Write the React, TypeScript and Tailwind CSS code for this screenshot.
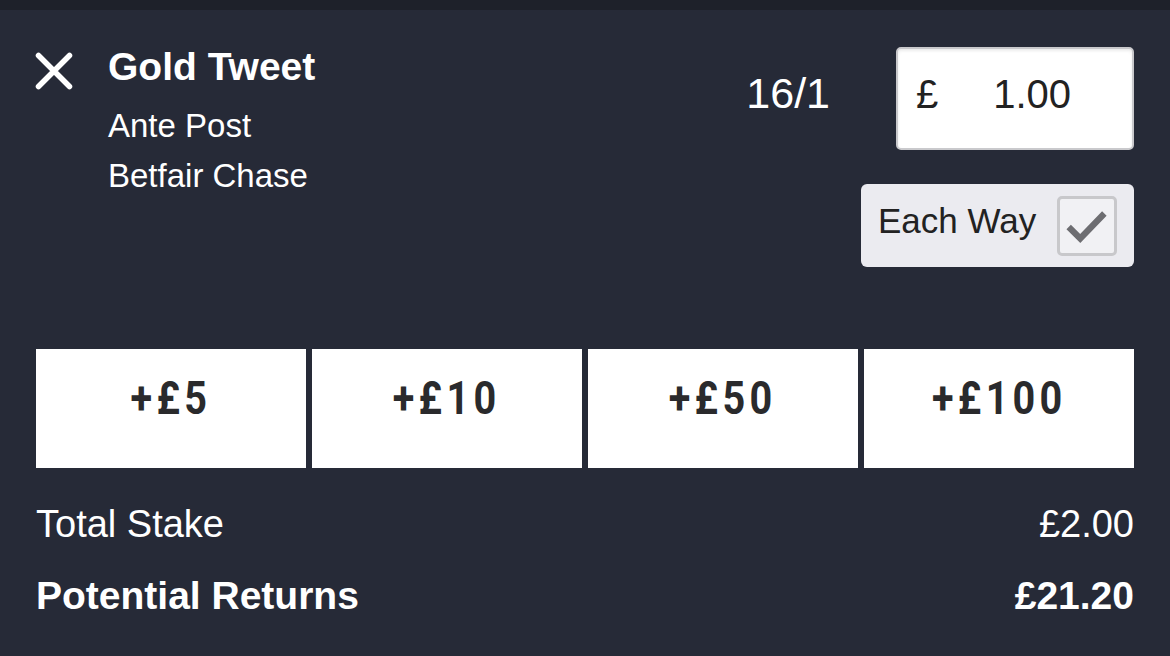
const quickStakes = ['+£5', '+£10', '+£50', '+£100'];

function CloseIcon() {
  return (
    <svg width="38" height="38" viewBox="0 0 38 38" className="shrink-0">
      <path d="M3.5 3.5 L34.5 34.5 M34.5 3.5 L3.5 34.5" stroke="white" strokeWidth="5.5" strokeLinecap="round" fill="none" />
    </svg>
  );
}

function CheckMark() {
  return (
    <svg width="56" height="56" viewBox="0 0 56 56">
      <path d="M9 29 L21 41 L46 15" stroke="#6d6d71" strokeWidth="6.5" fill="none" />
    </svg>
  );
}

export default function App() {
  return (
    <div
      className="w-[1170px] h-[656px] bg-[#262a37] text-white overflow-hidden"
      style={{ fontFamily: '"Liberation Sans", Arial, sans-serif' }}
    >
      <div className="h-[10px] bg-[#1e212a]" />

      <div className="px-[36px]">
        {/* selection header */}
        <div className="flex justify-between items-start pt-[35px]">
          <div className="flex items-start">
            <div className="mt-[7px] -ml-[1px]">
              <CloseIcon />
            </div>
            <div className="ml-[35px]">
              <div className="text-[39px] leading-[44px] font-bold">Gold Tweet</div>
              <div className="mt-[12px] text-[33px] leading-[50px]">Ante Post</div>
              <div className="text-[33px] leading-[50px]">Betfair Chase</div>
            </div>
          </div>

          <div className="flex flex-col items-end pt-[2px]">
            <div className="flex items-center">
              <span className="text-[43px] pb-[10px] mr-[66px]">16/1</span>
              <div className="w-[238px] h-[103px] bg-white rounded-[5px] border-2 border-[#c9c9cc] shadow-[inset_0_2px_3px_rgba(0,0,0,0.08)] flex items-center pl-[18px] pb-[10px] text-[#222] text-[40px]">
                <span>£</span>
                <span className="ml-[55px]">1.00</span>
              </div>
            </div>
            <div className="mt-[34px] w-[273px] h-[83px] bg-[#ebebf0] rounded-[6px] flex items-center justify-between pl-[17px] pr-[17px]">
              <span className="text-[35px] text-[#222] pb-[8px]">Each Way</span>
              <div className="w-[60px] h-[60px] rounded-[5px] border-[3px] border-[#c8c8cb] bg-[#f1f1f4] flex items-center justify-center">
                <CheckMark />
              </div>
            </div>
          </div>
        </div>

        {/* quick stakes */}
        <div className="mt-[82px] grid grid-cols-4 gap-[6px]">
          {quickStakes.map((s) => (
            <button
              key={s}
              className="h-[119px] bg-white text-[#2a2a2c] pb-[20px] flex items-center justify-center"
            >
              <span
                className="inline-block text-[46px] font-bold tracking-[5px] scale-x-[0.86]"
                style={{ fontFamily: 'Roboto, "Liberation Sans", sans-serif' }}
              >
                {s}
              </span>
            </button>
          ))}
        </div>

        {/* totals */}
        <div className="mt-[34px] flex justify-between text-[38px] leading-[44px]">
          <span>Total Stake</span>
          <span>£2.00</span>
        </div>
        <div className="mt-[28px] flex justify-between text-[39px] leading-[44px] font-bold">
          <span>Potential Returns</span>
          <span>£21.20</span>
        </div>
      </div>
    </div>
  );
}
